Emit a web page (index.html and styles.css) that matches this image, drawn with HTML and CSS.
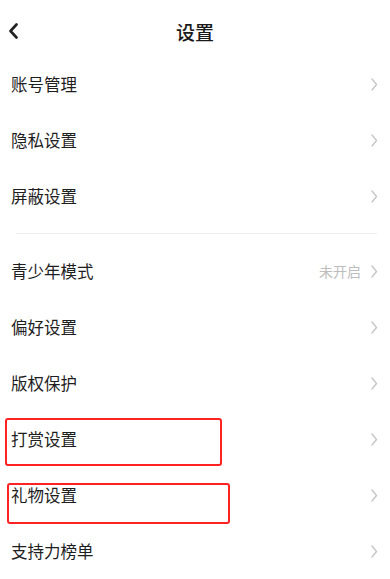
FILE: index.html
```html
<!DOCTYPE html>
<html lang="zh">
<head>
<meta charset="utf-8">
<link rel="stylesheet" href="styles.css">
</head>
<body>
<div class="page">
  <header class="header">
    <svg class="back" width="12" height="16" viewBox="0 0 12 16"><path d="M8.5 1.5 L2.5 8 L8.5 14.5" fill="none" stroke="#222" stroke-width="2.6" stroke-linecap="round" stroke-linejoin="round"/></svg>
    <h1 class="title">设置</h1>
  </header>
  <ul class="list">
    <li class="row"><span class="label">账号管理</span><svg class="arrow" width="7" height="13" viewBox="0 0 7 13"><path d="M1 1 L5.5 6.5 L1 12" fill="none" stroke="#c6c6c6" stroke-width="1.4" stroke-linecap="round" stroke-linejoin="round"/></svg></li>
    <li class="row"><span class="label">隐私设置</span><svg class="arrow" width="7" height="13" viewBox="0 0 7 13"><path d="M1 1 L5.5 6.5 L1 12" fill="none" stroke="#c6c6c6" stroke-width="1.4" stroke-linecap="round" stroke-linejoin="round"/></svg></li>
    <li class="row"><span class="label">屏蔽设置</span><svg class="arrow" width="7" height="13" viewBox="0 0 7 13"><path d="M1 1 L5.5 6.5 L1 12" fill="none" stroke="#c6c6c6" stroke-width="1.4" stroke-linecap="round" stroke-linejoin="round"/></svg></li>
  </ul>
  <div class="divider"></div>
  <ul class="list">
    <li class="row"><span class="label">青少年模式</span><span class="value">未开启</span><svg class="arrow" width="7" height="13" viewBox="0 0 7 13"><path d="M1 1 L5.5 6.5 L1 12" fill="none" stroke="#c6c6c6" stroke-width="1.4" stroke-linecap="round" stroke-linejoin="round"/></svg></li>
    <li class="row"><span class="label">偏好设置</span><svg class="arrow" width="7" height="13" viewBox="0 0 7 13"><path d="M1 1 L5.5 6.5 L1 12" fill="none" stroke="#c6c6c6" stroke-width="1.4" stroke-linecap="round" stroke-linejoin="round"/></svg></li>
    <li class="row"><span class="label">版权保护</span><svg class="arrow" width="7" height="13" viewBox="0 0 7 13"><path d="M1 1 L5.5 6.5 L1 12" fill="none" stroke="#c6c6c6" stroke-width="1.4" stroke-linecap="round" stroke-linejoin="round"/></svg></li>
    <li class="row"><span class="label">打赏设置</span><svg class="arrow" width="7" height="13" viewBox="0 0 7 13"><path d="M1 1 L5.5 6.5 L1 12" fill="none" stroke="#c6c6c6" stroke-width="1.4" stroke-linecap="round" stroke-linejoin="round"/></svg><span class="mark mark-a"></span></li>
    <li class="row"><span class="label">礼物设置</span><svg class="arrow" width="7" height="13" viewBox="0 0 7 13"><path d="M1 1 L5.5 6.5 L1 12" fill="none" stroke="#c6c6c6" stroke-width="1.4" stroke-linecap="round" stroke-linejoin="round"/></svg><span class="mark mark-b"></span></li>
    <li class="row"><span class="label">支持力榜单</span><svg class="arrow" width="7" height="13" viewBox="0 0 7 13"><path d="M1 1 L5.5 6.5 L1 12" fill="none" stroke="#c6c6c6" stroke-width="1.4" stroke-linecap="round" stroke-linejoin="round"/></svg></li>
  </ul>
</div>
</body>
</html>
```
FILE: styles.css
```css
html, body {
  margin: 0;
  padding: 0;
  background: #fff;
}
body {
  font-family: "Noto Sans CJK SC", "Noto Sans", sans-serif;
  color: #1c1c1c;
  width: 390px;
  height: 579px;
  overflow: hidden;
}
.header {
  height: 56px;
  box-sizing: border-box;
  padding-top: 6px;
  display: flex;
  align-items: center;
  justify-content: center;
  position: relative;
}
.back {
  position: absolute;
  left: 8px;
  top: 23px;
}
.title {
  margin: 0;
  font-size: 19px;
  font-weight: 500;
  color: #1a1a1a;
}
.list {
  list-style: none;
  margin: 0;
  padding: 0;
}
.row {
  height: 56px;
  display: flex;
  align-items: center;
  padding: 0 12px 0 11px;
  position: relative;
}
.label {
  font-size: 16.5px;
  flex: 1;
  color: #1e1e1e;
}
.value {
  font-size: 14px;
  color: #bdbdbd;
  margin-right: 10px;
}
.arrow {
  display: block;
}
.divider {
  height: 1px;
  background: #eeeeee;
  margin: 9px 13px 9px 16px;
}
.mark {
  position: absolute;
  border: 2.5px solid #ff2222;
  border-radius: 3px;
  box-sizing: border-box;
}
.mark-a {
  left: 5px;
  top: 7px;
  width: 217px;
  height: 48px;
}
.mark-b {
  left: 7px;
  top: 16px;
  width: 223px;
  height: 41px;
}
```
